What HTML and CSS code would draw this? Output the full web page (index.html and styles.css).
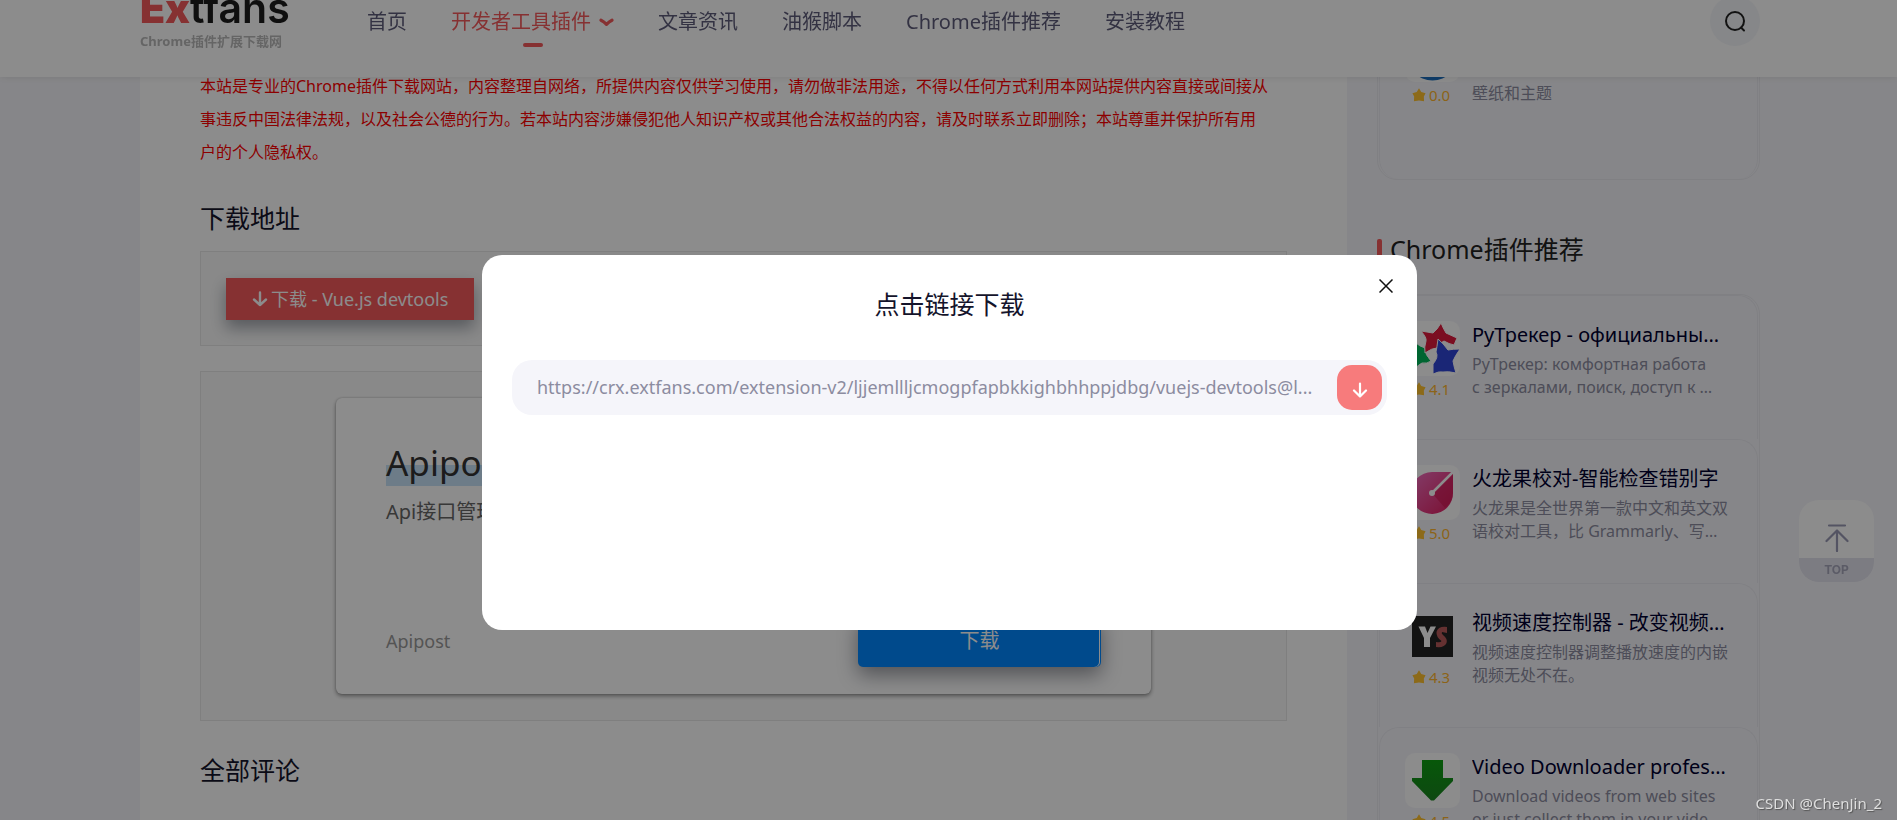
FILE: index.html
```html
<!DOCTYPE html>
<html lang="zh-CN">
<head>
<meta charset="utf-8">
<title>Vue.js devtools - Extfans</title>
<link rel="stylesheet" href="styles.css">
</head>
<body>
<header class="header">
  <a class="logo" href="#">
    <span class="logo-name"><b>Ex</b>tfans</span>
    <span class="logo-sub">Chrome插件扩展下载网</span>
  </a>
  <nav class="nav">
    <a href="#">首页</a>
    <a href="#" class="active">开发者工具插件<svg width="15" height="9" viewBox="0 0 15 9"><path d="M2 2.2Q5 3.6 7.500 6.300Q10 3.600 13 2.200" fill="none" stroke="currentColor" stroke-width="3.200" stroke-linecap="round" stroke-linejoin="round"/></svg></a>
    <a href="#">文章资讯</a>
    <a href="#">油猴脚本</a>
    <a href="#">Chrome插件推荐</a>
    <a href="#">安装教程</a>
  </nav>
  <button class="search" aria-label="搜索"><svg width="22" height="22" viewBox="0 0 22 22" fill="none" stroke="#222" stroke-width="2" stroke-linecap="round"><circle cx="11" cy="11" r="9"/><path d="M17 17.500L20 20.500"/></svg></button>
</header>

<div class="page">
  <main class="content">
    <p class="notice">本站是专业的Chrome插件下载网站，内容整理自网络，所提供内容仅供学习使用，请勿做非法用途，不得以任何方式利用本网站提供内容直接或间接从<br>事违反中国法律法规，以及社会公德的行为。若本站内容涉嫌侵犯他人知识产权或其他合法权益的内容，请及时联系立即删除；本站尊重并保护所有用<br>户的个人隐私权。</p>
    <h2 class="section-title">下载地址</h2>
    <div class="panel">
      <button class="download"><svg width="16" height="16" viewBox="0 0 16 16" fill="none" stroke="currentColor" stroke-width="2.400" stroke-linecap="round" stroke-linejoin="round"><path d="M8 1.500V14M2 8.500L8 14L14 8.500"/></svg>下载 - Vue.js devtools</button>
    </div>
    <div class="panel ad-panel">
      <article class="ad">
        <div>
          <h3 class="ad-title"><span>Apipost</span></h3>
          <p class="ad-text">Api接口管理</p>
        </div>
        <div class="ad-foot">
          <span>Apipost</span>
          <button class="ad-button">下载</button>
        </div>
      </article>
    </div>
    <h2 class="section-title">全部评论</h2>
  </main>

  <aside class="side">
    <div class="list">
      <a class="item first" href="#">
        <span class="thumb"><svg class="tile" viewBox="0 0 55 55"><circle cx="27.500" cy="27.500" r="26" fill="#1b6fc0"/></svg>
        <span class="rate"><svg width="14" height="14" viewBox="0 0 13 13"><path d="M6.500 .3L8.600 3.600L12.600 4.800L11 8L11.200 12.300L6.500 11.700L1.800 12.300L2 8L.4 4.800L4.400 3.600Z" fill="#ffc12e"/></svg>0.0</span></span>
        <span class="info"><span class="name">&nbsp;</span><span class="desc">&nbsp;<br>壁纸和主题</span></span>
      </a>
    </div>
    <h2 class="side-title">Chrome插件推荐</h2>
    <div class="list">
      <a class="item" href="#">
        <span class="thumb"><svg class="tile" viewBox="0 0 55 55"><g stroke="#fff" stroke-width="1"><path d="M11 22L1 18Q-1 22 2 29L0 46Q4 48 8 51Q12 44 17 42Q22 43 26 40Q20 34 20 27Q14 25 11 22Z" fill="#00b85a"/><path d="M36 2Q32 9 28 12L16 10Q22 17 21 20Q19 26 20 32Q27 27 32 27Q34 22 39 20Q44 23 49 24L52 17L41 12Q38 7 36 2Z" fill="#e01b3c"/><path d="M33 18Q32 26 31 31Q34 36 28 43V53Q34 50 38 51Q43 50 51 52Q49 46 48 40Q50 35 55 28Q48 28 43 29Q38 22 33 18Z" fill="#3045d8"/></g></svg>
        <span class="rate"><svg width="14" height="14" viewBox="0 0 13 13"><path d="M6.500 .3L8.600 3.600L12.600 4.800L11 8L11.200 12.300L6.500 11.700L1.800 12.300L2 8L.4 4.800L4.400 3.600Z" fill="#ffc12e"/></svg>4.1</span></span>
        <span class="info"><span class="name">РуТрекер - официальны…</span><span class="desc">РуТрекер: комфортная работа<br>с зеркалами, поиск, доступ к …</span></span>
      </a>
      <a class="item" href="#">
        <span class="thumb"><svg class="tile" viewBox="0 0 55 55"><defs><linearGradient id="pink" x1="0" y1="0" x2="1" y2="1"><stop offset="0" stop-color="#f070c0"/><stop offset="1" stop-color="#e01e5e"/></linearGradient></defs><path d="M48 7V27A21 21 0 1 1 27 7Z" fill="url(#pink)"/><path d="M48 7V27A21 21 0 0 1 40 43L27 28Z" fill="#d01550" opacity=".6"/><path d="M27 28L48 7" stroke="#fff" stroke-width="2.500"/><circle cx="27" cy="28" r="3" fill="#fff"/></svg>
        <span class="rate"><svg width="14" height="14" viewBox="0 0 13 13"><path d="M6.500 .3L8.600 3.600L12.600 4.800L11 8L11.200 12.300L6.500 11.700L1.800 12.300L2 8L.4 4.800L4.400 3.600Z" fill="#ffc12e"/></svg>5.0</span></span>
        <span class="info"><span class="name">火龙果校对-智能检查错别字</span><span class="desc">火龙果是全世界第一款中文和英文双语校对工具，比 Grammarly、写…</span></span>
      </a>
      <a class="item" href="#">
        <span class="thumb"><svg class="tile plain" viewBox="0 0 55 55"><rect x="7" y="7" width="41" height="41" fill="#242424"/><path d="M13.500 17.500H20L22.500 24L25.500 17.500H31L25 29V38H19V29Z" fill="#fff"/><path d="M42 18V24L37 23Q36 24.500 38 26Q43 30 41.500 34Q39.500 39 31 38V33Q36 34 36.500 32Q31 28 31.500 23Q33 17 42 18Z" fill="#b85a5a"/></svg>
        <span class="rate"><svg width="14" height="14" viewBox="0 0 13 13"><path d="M6.500 .3L8.600 3.600L12.600 4.800L11 8L11.200 12.300L6.500 11.700L1.800 12.300L2 8L.4 4.800L4.400 3.600Z" fill="#ffc12e"/></svg>4.3</span></span>
        <span class="info"><span class="name">视频速度控制器 - 改变视频…</span><span class="desc">视频速度控制器调整播放速度的内嵌视频无处不在。</span></span>
      </a>
      <a class="item" href="#">
        <span class="thumb"><svg class="tile" viewBox="0 0 55 55"><defs><linearGradient id="green" x1="0" y1="0" x2="0" y2="1"><stop offset="0" stop-color="#0da012"/><stop offset="1" stop-color="#1a8420"/></linearGradient></defs><path d="M17 7H38V25H48V28L29 47.500H26L7 28V25H17Z" fill="url(#green)"/></svg>
        <span class="rate"><svg width="14" height="14" viewBox="0 0 13 13"><path d="M6.500 .3L8.600 3.600L12.600 4.800L11 8L11.200 12.300L6.500 11.700L1.800 12.300L2 8L.4 4.800L4.400 3.600Z" fill="#ffc12e"/></svg>4.5</span></span>
        <span class="info"><span class="name">Video Downloader profes…</span><span class="desc">Download videos from web sites<br>or just collect them in your vide…</span></span>
      </a>
    </div>
  </aside>
</div>

<button class="top"><span class="top-icon"><svg width="24" height="28" viewBox="0 0 24 28" fill="none" stroke="#9a9ab4" stroke-width="2.200" stroke-linecap="round" stroke-linejoin="round"><path d="M4 1.500H20M12 27V6.500M1.500 17L12 6.500L22.500 17"/></svg></span><span class="top-label">TOP</span></button>

<div class="overlay">
  <section class="modal" role="dialog" aria-labelledby="modal-title">
    <button class="close" aria-label="关闭"><svg width="14" height="14" viewBox="0 0 14 14" stroke="#111" stroke-width="1.500"><path d="M.5 .5L13.500 13.500M13.500 .5L.5 13.500"/></svg></button>
    <h2 class="modal-title" id="modal-title">点击链接下载</h2>
    <div class="link-row">
      <a class="link" href="#">https://crx.extfans.com/extension-v2/ljjemllljcmogpfapbkkighbhhppjdbg/vuejs-devtools@l...</a>
      <button class="go" aria-label="下载"><svg width="16" height="16" viewBox="0 0 16 16" fill="none" stroke="#fff" stroke-width="2.200" stroke-linecap="round" stroke-linejoin="round"><path d="M8 1.500V14.500M2 8.500L8 14.500L14 8.500"/></svg></button>
    </div>
  </section>
</div>
<div class="watermark">CSDN @ChenJin_2</div>
</body>
</html>
```
FILE: styles.css
```css
* { box-sizing: border-box; }
html, body { height: 100%; }
body {
  margin: 0;
  overflow: hidden;
  background: #f5f5fa;
  color: #14142b;
  font: 16px/1.5 "Noto Sans", "Noto Sans CJK SC", sans-serif;
}
a { color: inherit; text-decoration: none; }
button { border: 0; padding: 0; font: inherit; cursor: pointer; }
h2, h3, p { margin: 0; font-weight: 400; }

.header {
  position: fixed;
  inset: -35px 0 auto;
  z-index: 2;
  display: flex;
  align-items: center;
  height: 112px;
  padding: 0 137px 0 140px;
  background: #fff;
  box-shadow: 0 0 8px rgba(0, 0, 0, .12);
}
.logo { display: flex; flex-direction: column; width: 227px; padding-bottom: 8px; }
.logo-name { font: 600 41px/48px Inter, sans-serif; color: #1c1c1c; }
.logo-name b { color: #f5595b; font-weight: 900; }
.logo-sub { font-size: 13px; line-height: 18px; font-weight: 700; color: #b8b8b8; }
.nav { display: flex; flex: 1; gap: 44px; padding-top: 2px; font-size: 20px; line-height: 30px; color: #5e5c7a; }
.nav .active { position: relative; display: flex; align-items: center; gap: 8px; color: #f5595b; }
.nav .active::after {
  content: "";
  position: absolute;
  left: 50%;
  bottom: -10px;
  width: 20px;
  height: 4px;
  margin-left: -10px;
  border-radius: 2px;
  background: #f5595b;
}
.search {
  display: grid;
  place-items: center;
  width: 50px;
  height: 50px;
  border-radius: 50%;
  background: #f4f6fa;
}

.page { display: flex; gap: 30px; padding: 0 137px 0 140px; }
.content { flex: 1; min-width: 0; padding: 70px 60px 0; background: #fff; }
.notice { color: #f00; line-height: 33px; }
.section-title { margin: 30px 0 14px; font-size: 25px; line-height: 38px; }
.panel { padding: 26px 25px 25px; border: 1px solid #e8e8e8; background: #fafafa; }
.download {
  display: flex;
  align-items: center;
  gap: 3px;
  height: 42px;
  padding: 0 26px;
  background: #f5595b;
  color: #fff;
  font-size: 18px;
  box-shadow: 0 8px 16px rgba(50, 60, 75, .45);
}
.ad-panel { margin-top: 25px; padding: 26px 135px; }
.ad {
  display: flex;
  flex-direction: column;
  justify-content: space-between;
  min-height: 296px;
  padding: 39px 50px 27px;
  border-radius: 6px;
  background: #fff;
  box-shadow: 0 2px 4px rgba(0, 0, 0, .4), 0 0 2px rgba(0, 0, 0, .2);
}
.ad-title { font-size: 35px; line-height: 52px; color: #333; }
.ad-title span { background: linear-gradient(#c6e2f8, #c6e2f8) 0 26px / 100% 22px no-repeat; }
.ad-text { font-size: 20px; line-height: 46px; color: #666; }
.ad-foot { display: flex; align-items: center; justify-content: space-between; font-size: 18px; color: #999; }
.ad-button {
  width: 243px;
  height: 52px;
  border-radius: 5px;
  background: #0088ff;
  color: #fff;
  font-size: 20px;
  box-shadow: inset -1px 0 #0088ff, inset -2px 0 #fff, 0 8px 20px rgba(20, 25, 40, .45);
}

.side { width: 383px; }
.list { border: 1px solid #e9e9ef; border-radius: 20px; padding: 0 1px; }
.item {
  display: flex;
  gap: 12px;
  min-height: 144px;
  padding: 25px 24px 0 25px;
  border: 1px solid #eaeaf0;
  border-bottom: 0;
  border-radius: 20px 20px 0 0;
}
.first { min-height: 178px; border-radius: 20px; }
.thumb { flex: none; width: 55px; }
.tile { display: block; width: 55px; height: 55px; border-radius: 10px; background: #fff; }
.plain { background: none; }
.rate { display: flex; align-items: center; gap: 3px; padding: 2px 0 0 7px; line-height: 22px; font-size: 15px; color: #ffb52e; }
.info { flex: 1; min-width: 0; }
.name { display: block; overflow: hidden; margin-bottom: 4px; font-size: 20px; line-height: 28px; white-space: nowrap; color: #000030; }
.desc {
  display: -webkit-box;
  overflow: hidden;
  -webkit-box-orient: vertical;
  -webkit-line-clamp: 2;
  line-height: 23px;
  color: #8c8ca0;
}
.side-title { display: flex; align-items: center; gap: 8px; margin: 50px 0 26px; font-size: 25px; line-height: 38px; color: #222; }
.side-title::before { content: ""; width: 5px; height: 20px; border-radius: 2px; background: #f5595b; }

.top {
  position: fixed;
  right: 23px;
  bottom: 238px;
  width: 75px;
  overflow: hidden;
  border-radius: 20px;
  background: #fff;
  color: #a6a6bb;
}
.top-icon { display: grid; place-items: center; height: 58px; padding-top: 18px; }
.top-label { display: block; background: #e2e2ed; font: 700 12px/24px Inter, sans-serif; }

.overlay {
  position: fixed;
  inset: 0;
  z-index: 3;
  padding-left: 2px;
  background: rgba(0, 0, 0, .45);
}
.modal {
  position: relative;
  width: 935px;
  min-height: 375px;
  margin: 255px auto 0;
  padding: 30px;
  border-radius: 20px;
  background: #fff;
}
.close { position: absolute; top: 24px; right: 24px; display: flex; background: none; }
.modal-title { margin-bottom: 37px; font-size: 25px; line-height: 38px; text-align: center; }
.link-row {
  display: flex;
  align-items: center;
  gap: 24px;
  height: 55px;
  padding: 0 5px 0 25px;
  border-radius: 20px;
  background: #f5f5fa;
}
.link { flex: 1; min-width: 0; overflow: hidden; font-size: 18px; white-space: nowrap; color: #8c8ca0; }
.go { display: grid; place-items: center; width: 45px; height: 45px; padding-top: 4px; border-radius: 15px; background: #f77b7c; }

.watermark {
  position: fixed;
  right: 15px;
  bottom: 6px;
  z-index: 4;
  font-size: 15px;
  line-height: 22px;
  color: #dedede;
  text-shadow: 1px 1px 1px #555;
}
```
